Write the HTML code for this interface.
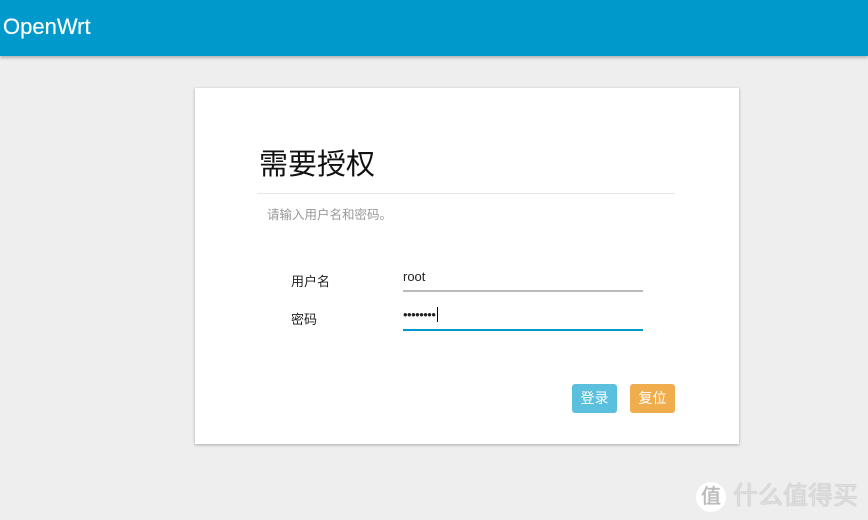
<!DOCTYPE html>
<html><head><meta charset="utf-8"><style>
body{margin:0;width:868px;height:520px;background:#eeeeee;font-family:"Liberation Sans","Noto Sans CJK SC",sans-serif;position:relative;overflow:hidden}
.hdr{position:absolute;left:0;top:0;width:868px;height:56px;background:#0099cc;box-shadow:0 2px 3px rgba(0,0,0,.25)}
.hdr span{position:absolute;left:3px;top:14px;color:#fff;font-size:22px;font-weight:normal;text-shadow:0 0 0.5px #fff}
.card{position:absolute;left:195px;top:88px;width:544px;height:356px;background:#fff;box-shadow:0 1px 3px rgba(0,0,0,.3)}
.t{position:absolute;left:64px;top:60px;font-size:29px;color:#111;line-height:34px}
.hr{position:absolute;left:62px;top:105px;width:418px;height:1px;background:#e8e8e8}
.d{position:absolute;left:72px;top:116px;font-size:12.5px;color:#999}
.l{position:absolute;left:96px;font-size:13px;color:#222}
.in{position:absolute;left:208px;width:240px;font-size:13px;color:#222}
.b{position:absolute;top:296px;height:29px;width:45px;border-radius:3px;color:#fff;font-size:14px;text-align:center;line-height:29px}
.w{position:absolute;right:10px;top:476px;font-size:25px;color:#ddd;text-shadow:0 0 1px #999}
</style></head><body>
<div class="hdr"><span>OpenWrt</span></div>
<div class="card">
<div class="t">需要授权</div>
<div class="hr"></div>
<div class="d">请输入用户名和密码。</div>
<div class="l" style="top:183px">用户名</div>
<div class="l" style="top:221px">密码</div>
<div class="in" style="top:181px;height:21px;border-bottom:2px solid #bbb">root</div>
<div class="in" style="top:219px;height:22px;border-bottom:2px solid #0099cc;letter-spacing:-0.5px">••••••••<span style="border-left:1px solid #000;margin-left:2px"></span></div>
<div class="b" style="left:377px;background:#5bc0de">登录</div>
<div class="b" style="left:435px;background:#f0ad4e">复位</div>
</div>
<div class="w"><span style="display:inline-block;width:30px;height:30px;border-radius:50%;background:#fff;color:#bbb;font-size:20px;text-align:center;line-height:30px;vertical-align:middle">值</span> 什么值得买</div>
</body></html>
